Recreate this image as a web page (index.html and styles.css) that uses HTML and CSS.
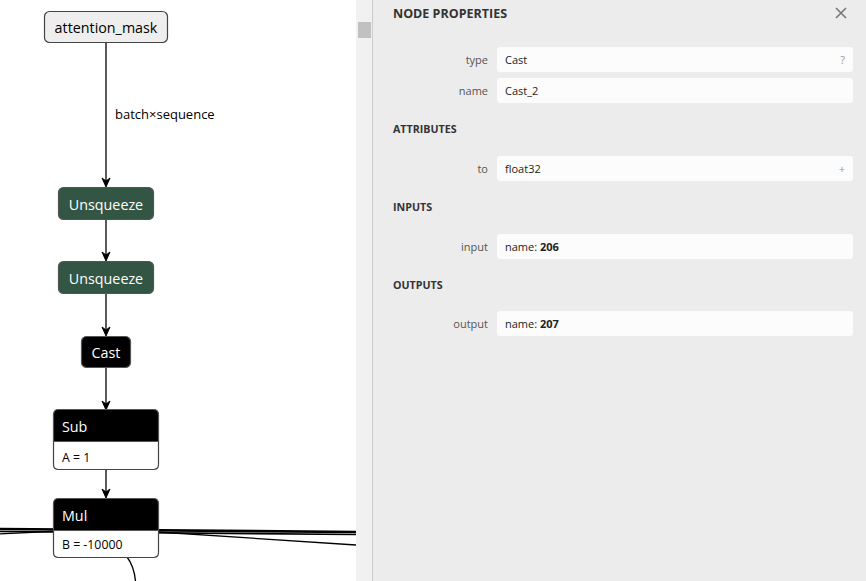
FILE: index.html
```html
<!DOCTYPE html>
<html>
<head>
<meta charset="utf-8">
<link rel="stylesheet" href="styles.css">
</head>
<body>
<div class="app">
  <div class="canvas">
    <svg class="graph" width="356" height="581" viewBox="0 0 356 581">
      <g class="edges">
        <path class="edge thick" d="M -2 529 L 356 532"/>
        <path class="edge mid" d="M -2 531.5 L 356 534.5"/>
        <path class="edge thin" d="M -2 534 L 60 531"/>
        <path class="edge thin" d="M 150 531.5 L 356 545"/>
        <path class="edge thin" d="M 127 557 Q 134 566 135.5 581"/>
        <path class="edge" d="M 106 43 L 106 181"/>
        <path class="arrow" d="M 102 178 L 106 187 L 110 178 L 106 181 Z"/>
        <path class="edge" d="M 106 220 L 106 255"/>
        <path class="arrow" d="M 102 252 L 106 261 L 110 252 L 106 255 Z"/>
        <path class="edge" d="M 106 294 L 106 330"/>
        <path class="arrow" d="M 102 327 L 106 336 L 110 327 L 106 330 Z"/>
        <path class="edge" d="M 106 368 L 106 404"/>
        <path class="arrow" d="M 102 401 L 106 410 L 110 401 L 106 404 Z"/>
        <path class="edge" d="M 106 469 L 106 492"/>
        <path class="arrow" d="M 102 489 L 106 498 L 110 489 L 106 492 Z"/>
        <text class="edge-label" x="115" y="119">batch×sequence</text>
      </g>
      <g class="node input">
        <rect x="44.5" y="11.5" width="123" height="31" rx="5"/>
        <text x="106" y="33" text-anchor="middle">attention_mask</text>
      </g>
      <g class="node transform">
        <rect x="58.5" y="187.5" width="95" height="32" rx="5"/>
        <text x="106" y="210" text-anchor="middle">Unsqueeze</text>
      </g>
      <g class="node transform">
        <rect x="58.5" y="261.5" width="95" height="32" rx="5"/>
        <text x="106" y="284" text-anchor="middle">Unsqueeze</text>
      </g>
      <g class="node op">
        <rect x="81.5" y="336.5" width="49" height="31" rx="5"/>
        <text x="106" y="358" text-anchor="middle">Cast</text>
      </g>
      <g class="node op-attr">
        <path class="attr-box" d="M 53.5 441.5 L 158.5 441.5 L 158.5 464.5 Q 158.5 469.5 153.5 469.5 L 58.5 469.5 Q 53.5 469.5 53.5 464.5 Z"/>
        <path class="head-box" d="M 53.5 441.5 L 53.5 414.5 Q 53.5 409.5 58.5 409.5 L 153.5 409.5 Q 158.5 409.5 158.5 414.5 L 158.5 441.5 Z"/>
        <text class="head" x="62" y="432">Sub</text>
        <text class="attr" x="62" y="462">A = 1</text>
      </g>
      <g class="node op-attr">
        <path class="attr-box" d="M 53.5 530.5 L 158.5 530.5 L 158.5 552.5 Q 158.5 557.5 153.5 557.5 L 58.5 557.5 Q 53.5 557.5 53.5 552.5 Z"/>
        <path class="head-box" d="M 53.5 530.5 L 53.5 503.5 Q 53.5 498.5 58.5 498.5 L 153.5 498.5 Q 158.5 498.5 158.5 503.5 L 158.5 530.5 Z"/>
        <text class="head" x="62" y="521">Mul</text>
        <text class="attr" x="62" y="549">B = -10000</text>
      </g>
    </svg>
  </div>
  <aside class="sidebar">
    <div class="scroll-track"><div class="scroll-thumb"></div></div>
    <div class="panel">
      <div class="panel-header">
        <span class="title">NODE PROPERTIES</span>
        <span class="close">
          <svg width="12" height="12" viewBox="0 0 12 12"><path d="M 1 1 L 11 11 M 11 1 L 1 11"/></svg>
        </span>
      </div>
      <div class="props first">
        <div class="row"><div class="label">type</div><div class="value">Cast<span class="action">?</span></div></div>
        <div class="row"><div class="label">name</div><div class="value">Cast_2</div></div>
      </div>
      <div class="section">
        <div class="section-title">ATTRIBUTES</div>
        <div class="props">
          <div class="row"><div class="label">to</div><div class="value">float32<span class="action">+</span></div></div>
        </div>
      </div>
      <div class="section">
        <div class="section-title">INPUTS</div>
        <div class="props">
          <div class="row"><div class="label">input</div><div class="value">name: <b>206</b></div></div>
        </div>
      </div>
      <div class="section last">
        <div class="section-title">OUTPUTS</div>
        <div class="props">
          <div class="row"><div class="label">output</div><div class="value">name: <b>207</b></div></div>
        </div>
      </div>
    </div>
  </aside>
</div>
</body>
</html>
```

FILE: styles.css
```css
* { box-sizing: border-box; }
html, body {
  margin: 0;
  padding: 0;
  width: 866px;
  height: 581px;
  overflow: hidden;
  font-family: "Open Sans", "Noto Sans", sans-serif;
}
.app {
  display: flex;
  width: 866px;
  height: 581px;
}
.canvas {
  width: 356px;
  height: 581px;
  background: #ffffff;
  flex: none;
  overflow: hidden;
}
.graph { display: block; }
.graph text { font-family: "Open Sans", "Noto Sans", sans-serif; }
.edge { fill: none; stroke: #000; stroke-width: 1.3; }
.edge.thick { stroke-width: 2.6; }
.edge.mid { stroke-width: 1.6; }
.edge.thin { stroke-width: 1.3; }
.arrow { fill: #000; stroke: #000; stroke-width: 1; stroke-linejoin: round; }
.edge-label { font-size: 13px; fill: #000; }
.node text { font-size: 14.3px; }
.node.input rect { fill: #eeeeee; stroke: #444; stroke-width: 1.2; }
.node.input text { fill: #000; }
.node.transform rect { fill: #335544; stroke: #555; stroke-width: 1.2; }
.node.transform text { fill: #fff; }
.node.op rect { fill: #000; stroke: #555; stroke-width: 1.2; }
.node.op text { fill: #fff; }
.head-box { fill: #000; stroke: #555; stroke-width: 1.2; }
.attr-box { fill: #fff; stroke: #444; stroke-width: 1.2; }
.node text.head { fill: #fff; font-size: 14.3px; }
.node text.attr { fill: #000; font-size: 12.3px; }

.sidebar {
  flex: 1;
  display: flex;
  background: #ececec;
  height: 581px;
}
.scroll-track {
  width: 17px;
  flex: none;
  background: #f1f1f1;
  border-right: 1px solid #cbcbcb;
  padding: 22px 1px 0 2px;
}
.scroll-thumb {
  width: 13px;
  height: 16px;
  background: #c1c1c1;
}
.panel {
  flex: 1;
  padding: 0 13px 0 20px;
  color: #222;
}
.panel-header {
  height: 26px;
  display: flex;
  align-items: center;
  justify-content: space-between;
}
.title {
  font-size: 12.5px;
  font-weight: 700;
  color: #333;
}
.close {
  width: 12px;
  height: 12px;
  margin-right: 6px;
  display: flex;
}
.close path { stroke: #777; stroke-width: 1.6; fill: none; }
.props {
  display: flex;
  flex-direction: column;
  gap: 6px;
}
.props.first { margin-top: 21px; }
.row {
  display: grid;
  grid-template-columns: 95px 1fr;
  column-gap: 9px;
  height: 25px;
  align-items: center;
}
.label {
  text-align: right;
  font-size: 11px;
  color: #555;
}
.value {
  height: 25px;
  background: #fcfcfc;
  border-radius: 3px;
  display: flex;
  align-items: center;
  padding: 0 8px;
  font-size: 11px;
  color: #222;
  white-space: pre;
}
.value b { font-weight: 700; }
.action {
  margin-left: auto;
  color: #999;
  font-size: 11px;
}
.section { margin-top: 16px; }
.section.last { margin-top: 16px; }
.section.last .section-title { margin-bottom: 16px; }
.section-title {
  height: 20px;
  line-height: 20px;
  font-size: 10.7px;
  font-weight: 700;
  color: #333;
  margin-bottom: 17px;
}
```
